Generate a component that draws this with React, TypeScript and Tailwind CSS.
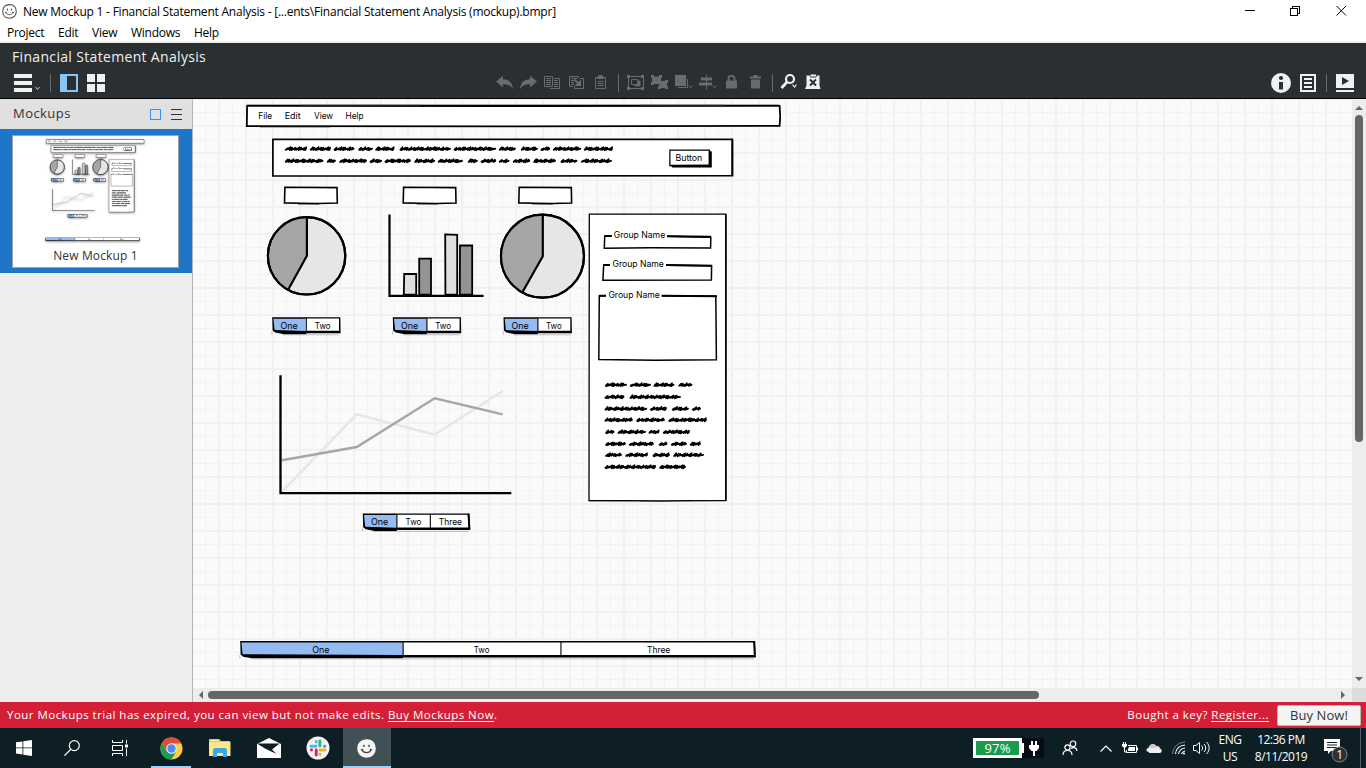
import React from "react";

type Word = [number, number];

const HEADER_LINES: { y: number; words: Word[] }[] = [
  { y: 148.9, words: [[285.3, 306.7], [310.3, 330.7], [334, 354.3], [358.7, 372.7], [375.7, 394.3], [400, 450.7], [454, 496], [499.3, 515.7], [521.3, 537.7], [541, 550], [553.3, 581], [584.3, 612.7]] },
  { y: 161, words: [[285.3, 323.3], [327.3, 335.7], [339.7, 366.7], [370, 381.7], [385, 410.7], [414.7, 435], [438.3, 462.7], [468.3, 477.7], [481, 496], [499.3, 509.3], [513.3, 530], [533.7, 555.7], [561, 577.3], [581.3, 611.7]] },
];

const PANEL_LINES: { y: number; words: Word[] }[] = [
  { y: 384.9, words: [[605.3, 626.7], [630.3, 650.7], [654, 674.3], [678.7, 692.3]] },
  { y: 397, words: [[605, 624.3], [630, 680.7]] },
  { y: 408.8, words: [[605, 647], [650.3, 666.7], [672.3, 688.7], [692.3, 700.7]] },
  { y: 420, words: [[605, 632.7], [636.7, 664.7], [668.7, 706.7]] },
  { y: 432, words: [[605.7, 614.3], [618, 645.7], [649, 659.3], [663.3, 689.7]] },
  { y: 444, words: [[605.7, 625.7], [629.3, 653.7], [659.3, 667.3], [671.3, 686.7], [690.3, 700.7]] },
  { y: 455, words: [[605.7, 621.7], [625.7, 647.7], [653, 669.7], [673.7, 703.7]] },
  { y: 467, words: [[605, 655.7], [659.7, 685.7]] },
];

const STEPS = [1.7, 2.5, 1.5, 3.1, 1.8, 2.2, 2.8, 1.6, 3.3];
const RISES = [1.2, 0.5, 1.7, 1.3, 0.8, 1.9, 1.4];

function scribble([a, b]: Word, y: number) {
  let d = `M${a + 0.3} ${y + 0.9}`;
  let i = Math.round(a * 3 + y);
  let x = a + 1.4;
  while (x < b - 1.6) {
    const up = RISES[i % RISES.length];
    const down = 0.8 + (i % 3) * 0.3;
    d += `L${(x + 1.2).toFixed(1)} ${(y - up).toFixed(1)}L${x.toFixed(1)} ${(y + down).toFixed(1)}`;
    x += STEPS[i % STEPS.length];
    i += 1;
  }
  return d + `L${b - 0.6} ${y - 0.3}`;
}

function Scribbles({ lines }: { lines: { y: number; words: Word[] }[] }) {
  return (
    <g fill="none" stroke="#000" strokeWidth="1.6" strokeLinecap="round" strokeLinejoin="round">
      {lines.map((l) =>
        l.words.map((w) => (
          <g key={`${l.y}-${w[0]}`}>
            <path d={scribble(w, l.y)} />
            <path d={`M${w[0] + 0.8} ${l.y + 0.2}H${w[1] - 0.8}`} strokeWidth="1.2" />
          </g>
        ))
      )}
    </g>
  );
}

function Label({ x, y, w, children }: { x: number; y: number; w: number; children: string }) {
  return (
    <text x={x} y={y} textLength={w} lengthAdjust="spacingAndGlyphs" fontSize="8.8" fill="#000" className="font-['Inter','Open_Sans',sans-serif]">
      {children}
    </text>
  );
}

function Pie({ cx, cy, r, ex, ey }: { cx: number; cy: number; r: number; ex: number; ey: number }) {
  return (
    <g stroke="#000" strokeWidth="2.2" strokeLinejoin="round">
      <circle cx={cx} cy={cy} r={r} fill="#e6e6e6" />
      <path d={`M${cx + 0.3} ${cy}V${cy - r}A${r} ${r} 0 0 0 ${ex} ${ey}Z`} fill="#a6a6a6" stroke="none" />
      <path d={`M${cx + 0.3} ${cy - r}V${cy}L${ex} ${ey}`} fill="none" />
      <circle cx={cx} cy={cy} r={r} fill="none" />
    </g>
  );
}

type Seg = { t: string; x: number; w: number };

function ButtonBar({ x, y, right, h, dividers, segs }: { x: number; y: number; right: number; h: number; dividers: number[]; segs: Seg[] }) {
  const b = y + h;
  return (
    <g>
      <path d={`M${x} ${y}H${right}L${right + 0.3} ${b - 0.7}H${dividers[0]}V${b + 0.2}H${x + 12}L${x + 3} ${b - 1.4}L${x + 0.4} ${b - 3.5}Z`} fill="#000" />
      <path d={`M${x - 0.3} ${b - 3}V${b + 0.6}M${x + 10} ${b + 0.8}H${right - 1}`} stroke="#999" strokeWidth=".6" />
      <path d={`M${x + 1.2} ${y + 1.5}H${dividers[0]}V${b - 3}L${x + 2.4} ${b - 3.9}Z`} fill="#94bbf2" />
      {dividers.map((d, i) => (
        <path
          key={d}
          d={`M${d + 0.5} ${y + 1.4}H${(dividers[i + 1] ?? right - 0.7) - 0.6}V${b - 3.2}H${d + 0.5}Z`}
          fill="#fff"
        />
      ))}
      <path d={`M${dividers[0]} ${y + 1}V${b - 1}`} stroke="#222" strokeWidth="1" />
      {segs.map((s) => (
        <Label key={s.t} x={s.x} y={y + 11.6} w={s.w}>{s.t}</Label>
      ))}
    </g>
  );
}

function Wireframe({ viewBox, className }: { viewBox: string; className: string }) {
  return (
    <svg viewBox={viewBox} className={className} aria-hidden="true">
      {/* menu bar */}
      <path d="M247.1 105.8L520 106L779.6 105.8L780.2 117L779.6 125.9L520 126.3L246.8 126.1Z" fill="#fff" stroke="#000" strokeWidth="1.8" />
      <path d="M247 105.2H779" stroke="#000" strokeWidth="1" />
      <path d="M300 104.8H420M640 104.8H725M260 127.4H330" stroke="#888" strokeWidth=".7" />
      <Label x={258.3} y={118.8} w={13.8}>File</Label>
      <Label x={284.7} y={118.8} w={16}>Edit</Label>
      <Label x={314} y={118.8} w={19}>View</Label>
      <Label x={345.5} y={118.8} w={18.2}>Help</Label>

      {/* header block */}
      <path d="M272.900 139.300L732.400 139.400V175.600L500 176L272.900 175.900Z" fill="#fff" stroke="#000" strokeWidth="1.700" />
      <path d="M732.300 140V176" stroke="#000" strokeWidth="1.800" />
      <Scribbles lines={HEADER_LINES} />
      <path d="M669.3 149.5H710V151L711.8 151.4V167.6H672L671.5 166.2H669.2Z" fill="#000" />
      <path d="M670.5 150.8H708.6V164.5L670.5 164.7Z" fill="#fff" />
      <Label x={675.5} y={161} w={26.8}>Button</Label>

      {[284, 402.7, 518.3].map((x) => (
        <g key={x}>
          <path d={`M${x + 0.9} 187.3L${x + 53} 187.6L${x + 53.3} 203L${x + 34} 203.500L${x + 17} 203.300L${x + 0.5} 202.900Z`} fill="#fff" stroke="#000" strokeWidth="1.600" />
          <path d={`M${x + 14} 203.9H${x + 35}`} stroke="#000" strokeWidth="1" />
        </g>
      ))}

      <Pie cx={306.6} cy={255.8} r={38.7} ex={288.4} ey={289.2} />
      <Pie cx={542.5} cy={256.2} r={41.5} ex={522.4} ey={292.2} />

      {/* column chart */}
      <g stroke="#000" strokeWidth="1.8">
        <path d="M404.2 274H416.2V294.6H403.8Z" fill="#dedede" />
        <path d="M419.2 258.6H431V294.6H419.2Z" fill="#939393" />
        <path d="M445.2 234.3L457.2 234.8V294.6H445.4Z" fill="#dedede" />
        <path d="M460 245.5H472.2V294.6H459.8Z" fill="#939393" />
      </g>
      <path d="M389.5 214.5V295.8H483.6" fill="none" stroke="#000" strokeWidth="2.2" />

      <ButtonBar x={272.2} y={317.2} right={340.3} h={16.8} dividers={[306.4]} segs={[{ t: "One", x: 280.4, w: 17.2 }, { t: "Two", x: 314.8, w: 15.8 }]} />
      <ButtonBar x={392.8} y={317.2} right={460.9} h={16.8} dividers={[426.8]} segs={[{ t: "One", x: 400.9, w: 17.2 }, { t: "Two", x: 435.2, w: 15.8 }]} />
      <ButtonBar x={503.5} y={317.2} right={571.6} h={16.8} dividers={[537.8]} segs={[{ t: "One", x: 511.6, w: 17.2 }, { t: "Two", x: 545.9, w: 15.8 }]} />

      {/* line chart */}
      <path d="M282 491.7L356.7 414.3L434.7 434.7L502.7 391" fill="none" stroke="#e6e6e6" strokeWidth="2.4" />
      <path d="M282 460.2L356.7 447L434.7 398.3L502.7 414.3" fill="none" stroke="#a6a6a6" strokeWidth="2.4" />
      <path d="M280.5 375.3V493.2H511.3" fill="none" stroke="#000" strokeWidth="2.3" />

      <ButtonBar x={362.8} y={513.4} right={469.6} h={17.3} dividers={[396.8, 430.4]} segs={[{ t: "One", x: 371, w: 17.2 }, { t: "Two", x: 405.5, w: 15.8 }, { t: "Three", x: 438.8, w: 23.2 }]} />
      <path d="M468.300 513.800L469.600 529.500" stroke="#000" strokeWidth="1.800" />
      <ButtonBar x={240.2} y={641.1} right={755.2} h={17} dividers={[403, 561]} segs={[{ t: "One", x: 312.2, w: 17.2 }, { t: "Two", x: 473.7, w: 15.8 }, { t: "Three", x: 647, w: 23.2 }]} />
      <path d="M754 641.300L755 657" stroke="#000" strokeWidth="1.900" />

      {/* form panel */}
      <path d="M589.3 214.2H725.8V500.3L660 501L589 500.5Z" fill="#fff" stroke="#000" strokeWidth="1.3" />
      <path d="M725.8 214.5V501" stroke="#000" strokeWidth="1.6" />
      <path d="M589 501.6H640M690 501.4H726" stroke="#999" strokeWidth=".7" />
      <g fill="none" stroke="#000" strokeWidth="1.5">
        <path d="M611.7 236.1H604.7L604.3 248.2L650 247.8L710.6 248.1L710.8 237.2L667 236.2" />
        <path d="M610 265H603.7L602.9 280.2L711.4 280L711.6 265.8L666 265.2" />
        <path d="M606 295.8H599.3L598.8 359.4L655 360.2L716.4 359.8L715.8 296.2L661.7 295.8" />
      </g>
      <g stroke="#000" strokeWidth="2">
        <path d="M604.8 236H611.7M603.8 265H610M599.4 295.8H606M667 236.2L711 236.8M666 265L712 265.8M661.7 295.8L717 296.3" />
      </g>
      <Label x={613.8} y={237.8} w={51.4}>Group Name</Label>
      <Label x={612.5} y={266.9} w={51.4}>Group Name</Label>
      <Label x={608.4} y={297.7} w={51.4}>Group Name</Label>
      <Scribbles lines={PANEL_LINES} />
    </svg>
  );
}

function Grid() {
  return (
    <svg className="absolute inset-0 h-full w-full">
      <defs>
        <pattern id="grid" x="-2" y="-1" width="27" height="27" patternUnits="userSpaceOnUse">
          <path d="M0 0H2V27H0ZM0 0H27V2H0Z" fill="#f1f1f1" />
          <path d="M14 0H15V27H14ZM0 14H27V15H0Z" fill="#f3f3f3" />
        </pattern>
      </defs>
      <rect width="100%" height="100%" fill="url(#grid)" />
    </svg>
  );
}

function Face({ className, filled }: { className: string; filled?: boolean }) {
  return (
    <svg viewBox="0 0 20 20" className={className} fill="none" strokeLinecap="round">
      <path d="M10 .9C15.5.7 18.9 4 19 9.6C19.1 15 16 19 10 19C4.400 19 1 15.200 1 10C1 4.500 4.500 1 10 .9Z" fill={filled ? "#f4f4f4" : "#fff"} stroke={filled ? "#f4f4f4" : "#555"} strokeWidth="1.5" />
      <path d="M5.300 11.300C7 15.300 13 15.300 14.800 11.200M4.600 11.500L5.800 10.900M14.100 10.900L15.400 11.400" stroke="#444" strokeWidth="1.3" />
      <ellipse cx="7.300" cy="7.300" rx=".9" ry="1.200" fill="#444" />
      <ellipse cx="12.600" cy="7.300" rx=".9" ry="1.200" fill="#444" />
    </svg>
  );
}

function Cell({ children, on }: { children: React.ReactNode; on?: boolean }) {
  return (
    <svg viewBox="0 0 24 24" className={on ? "h-6 w-6 shrink-0 text-[#f0f0f0]" : "h-6 w-6 shrink-0 text-[#696b6c]"} fill="none" stroke="currentColor">
      {children}
    </svg>
  );
}

function Sep({ className }: { className: string }) {
  return (
    <div className={`flex h-[18px] shrink-0 justify-center ${className}`}>
      <div className="w-px bg-[#686b6d]" />
    </div>
  );
}

function TitleBar() {
  return (
    <header className="flex h-[22px] items-center bg-white">
      <Face className="ml-0.5 h-[15px] w-[15px]" />
      <span className="ml-1.5 whitespace-pre pt-px text-[12px] leading-[18px] tracking-[-0.226px]">New Mockup 1 - Financial Statement Analysis - [...ents\Financial Statement Analysis (mockup).bmpr]</span>
      <svg viewBox="0 0 102 12" className="ml-auto mr-[19px] h-3 w-[102px] fill-none stroke-black" shapeRendering="crispEdges">
        <path d="M0 5.500H10" />
        <path d="M45.500 3.500H52.500V10.500H45.500ZM47.500 3V1.500H54.500V8.500H53" />
        <path d="M91.500 1L101 10.500M101 1L91.500 10.500" shapeRendering="auto" />
      </svg>
    </header>
  );
}

function MenuBar() {
  return (
    <nav className="flex h-[21px] border-b-2 border-[#f0f0f0] bg-white pl-[7px] text-[12px] leading-[21px] tracking-[-0.25px]">
      <span className="w-[51px]">Project</span>
      <span className="w-[34px]">Edit</span>
      <span className="w-[39px]">View</span>
      <span className="w-[63px]">Windows</span>
      <span>Help</span>
    </nav>
  );
}

function Toolbar() {
  return (
    <section className="h-14 border-b border-black bg-[#2a2f31] text-[#f0f0f0]">
      <h1 className="h-7 pl-3 pt-0.5 text-[14px] leading-6 tracking-[0.33px]">Financial Statement Analysis</h1>
      <div className="flex h-6 items-center">
        <div className="flex w-[493px] items-center pl-3.5">
          <svg viewBox="0 0 27 18" className="h-[18px] w-[27px]" fill="#f0f0f0">
            <path d="M0 0H18V4H0ZM0 7H18V11H0ZM0 14H18V18H0Z" />
            <path d="M21.500 13L23.500 15.500L25.500 13" fill="none" stroke="#ccc" />
          </svg>
          <Sep className="w-[19px]" />
          <svg viewBox="0 0 18 18" className="h-[18px] w-[18px]">
            <path d="M0 0H18V18H0ZM7 2V16H16V2Z" fill="#8cc4f2" fillRule="evenodd" />
          </svg>
          <svg viewBox="0 0 18 18" className="ml-[9px] h-[18px] w-[18px]" fill="#f0f0f0">
            <path d="M0 0H8V8H0ZM10 0H18V8H10ZM0 10H8V18H0ZM10 10H18V18H10Z" />
          </svg>
        </div>
        <Cell><path d="M3 10.500L10 4.700V8.200C16 8.200 19.500 11.500 20 18.500C18 14.500 15 13 10 13.200V16.500Z" fill="currentColor" stroke="none" /></Cell>
        <Cell><path d="M20 10.500L13 4.700V8.200C7 8.200 3.500 11.500 3 18.500C5 14.500 8 13 13 13.200V16.500Z" fill="currentColor" stroke="none" /></Cell>
        <Cell>
          <path d="M3.500 5.500H11.500V15.500H3.500ZM5 7.500H10M5 9.500H10M5 11.500H10M5 13.500H10" />
          <path d="M13 7.500H18.500V17.500H9M13 9.500H17M13 11.500H17M13 13.500H17M13 15.500H17" />
        </Cell>
        <Cell>
          <path d="M8 15.500H4.500V5.500H13.500V7M6 7.500H12M6 9.500H9M6 11.500H9M6 13.500H9" />
          <path d="M15 7.500H18.500V17.500H9.500V15" />
          <path d="M9.500 8.500L14.500 13.500" strokeWidth="2" />
          <path d="M16 8.500V15H9.500Z" fill="currentColor" stroke="none" />
        </Cell>
        <Cell>
          <path d="M6.500 6.500H16.500V17.500H6.500Z" />
          <path d="M8.500 5.500H9.500V4H13.500V5.500H14.500V8H8.500Z" fill="currentColor" stroke="none" />
          <path d="M8.500 10.500H14.500M8.500 12.500H14.500M8.500 14.500H14.500" />
        </Cell>
        <Sep className="w-2.5" />
        <Cell>
          <path d="M5.500 6V17M20.500 6V17M6 5.500H20M6 17.500H20M8.500 8.500H14.500V13.500H8.500Z" />
          <path d="M15.500 10H17V15H12V14.500H15.500Z" fill="currentColor" />
          <path d="M4 4H7V7H4ZM18 4H21V7H18ZM4 16H7V19H4ZM18 16H21V19H18Z" fill="currentColor" stroke="none" />
        </Cell>
        <Cell>
          <path d="M5.500 6H13.500V12.500H5.500ZM13 10.500H19.500V16.500H12.500Z" fill="currentColor" />
          <path d="M4 4H7V7H4ZM12 4H15V7H12ZM4 11H7V14H4ZM18 9H21V12H18ZM18 15H21V18H18ZM11 15H14V18H11Z" fill="currentColor" stroke="none" />
        </Cell>
        <Cell>
          <path d="M4 4H15V15H4Z" fill="currentColor" stroke="none" />
          <path d="M7 16.500H16.500V8M17.500 14.500L19.500 17L21.500 14.500" />
        </Cell>
        <Cell>
          <path d="M6 6.500H17V9.500H6ZM4 11.500H17V14.500H4Z" fill="currentColor" stroke="none" />
          <path d="M11.500 4V18.500M17.500 14.500L19.500 17L21.500 14.500" />
        </Cell>
        <Cell>
          <path d="M7 9.500H18V17.500H7Z" fill="currentColor" stroke="none" />
          <path d="M9.500 11V7.500C9.500 4 15.500 4 15.500 7.500V11" strokeWidth="1.800" />
        </Cell>
        <Cell>
          <path d="M7 5.500H18V7.500H7ZM10.500 4H14.500V6H10.500ZM8 8.500H17V17.500H8Z" fill="currentColor" stroke="none" />
        </Cell>
        <Sep className="w-2.5" />
        <Cell on>
          <circle cx="13" cy="8" r="4" strokeWidth="2.200" />
          <path d="M10 11L4.500 17" strokeWidth="2.800" />
          <path d="M15.500 13.500L17.500 16L19.500 13.500" strokeWidth="1.200" />
        </Cell>
        <Cell on>
          <path d="M5.500 4.500H8.500L9.500 6.500H15L16 4.500H18.500V14.500L19.500 18H4L5.500 14.500Z" fill="currentColor" stroke="none" />
          <path d="M9.500 3.500H15V5.500H9.500Z" fill="currentColor" stroke="none" />
          <path d="M9 8.500L15 14.500M15 8.500L9 14.500" stroke="#2a2f31" strokeWidth="1.900" />
        </Cell>
        <svg viewBox="0 0 20 20" className="ml-auto h-5 w-5">
          <circle cx="10" cy="10" r="10" fill="#f0f0f0" />
          <circle cx="10" cy="5" r="2.100" fill="#2a2f31" />
          <path d="M8 9H12V16.500H8Z" fill="#2a2f31" />
        </svg>
        <svg viewBox="0 0 16 18" className="ml-[9px] h-[18px] w-4" fill="none" stroke="#f0f0f0" strokeWidth="2">
          <path d="M1 1H15V17H1ZM4 5H12M4 9H12M4 13H12" />
        </svg>
        <Sep className="w-5" />
        <svg viewBox="0 0 18 18" className="mr-3 h-[18px] w-[18px]">
          <path d="M0 0H18V14H0ZM0 16H18V18H0Z" fill="#f0f0f0" />
          <path d="M6 3L13 7L6 11Z" fill="#2a2f31" />
        </svg>
      </div>
    </section>
  );
}

function Sidebar() {
  return (
    <aside className="w-[193px] shrink-0 border-r border-[#b4b4b4] bg-[#eeeeee] text-[#333]">
      <div className="flex h-[30px] items-center bg-[#e0e0e0] pl-[13px] pr-2.5">
        <h2 className="-mt-0.5 text-[13px] leading-4 tracking-[0.45px]">Mockups</h2>
        <div className="ml-auto h-[11px] w-[11px] border border-[#2f96f3]" />
        <svg viewBox="0 0 11 11" className="ml-2.5 h-[11px] w-[11px]"><path d="M0 .5H11M0 5.500H11M0 10.500H11" stroke="#333" /></svg>
      </div>
      <div className="h-36 bg-[#1f75c8] pl-3 pt-1.5">
        <div className="flex h-[133px] w-[167px] flex-col items-center border border-[#a0a0a0] bg-white">
          <Wireframe viewBox="65 87 900 610" className="h-[112px] w-[165px] shrink-0 drop-shadow-[0_1px_1px_rgba(0,0,0,0.45)]" />
          <p className="text-[12px] leading-4 tracking-[0.15px]">New Mockup 1</p>
        </div>
      </div>
    </aside>
  );
}

function Canvas() {
  return (
    <main className="flex min-w-0 flex-1 flex-col">
      <div className="flex min-h-0 flex-1">
        <div className="relative min-w-0 flex-1 overflow-hidden bg-[#fafafa]">
          <Grid />
          <Wireframe viewBox="193 99 1159 589" className="relative h-[589px] w-[1159px]" />
        </div>
        <div className="flex w-3.5 flex-col items-center bg-[#ededed] pt-[7px]">
          <svg viewBox="0 0 8 4" className="h-1 w-2"><path d="M0 4L4 0L8 4Z" fill="#666" /></svg>
          <div className="mt-[5px] h-[327px] w-2 rounded-full bg-[#666]" />
          <svg viewBox="0 0 8 4" className="mb-[7px] mt-auto h-1 w-2"><path d="M0 0L4 4L8 0Z" fill="#666" /></svg>
        </div>
      </div>
      <div className="flex h-3.5 items-center bg-[#ededed] pl-1.5">
        <svg viewBox="0 0 4 8" className="h-2 w-1"><path d="M4 0L0 4L4 8Z" fill="#666" /></svg>
        <div className="ml-[5px] h-2 w-[831px] rounded-full bg-[#666]" />
        <svg viewBox="0 0 4 8" className="ml-auto mr-[7px] h-2 w-1"><path d="M0 0L4 4L0 8Z" fill="#666" /></svg>
        <div className="h-full w-3.5 bg-[#dcdcdc]" />
      </div>
    </main>
  );
}

function TrialBar() {
  return (
    <section className="flex h-[26px] items-center bg-[#d32037] pl-[7px] pr-[5px] text-[11.5px] tracking-[0.47px] text-white">
      <p>Your Mockups trial has expired, you can view but not make edits. <u className="underline-offset-2">Buy Mockups Now</u>.</p>
      <p className="ml-auto">Bought a key? <u className="underline-offset-2">Register...</u></p>
      <button className="ml-2 h-[21px] w-[84px] rounded-[2px] border border-[#bbb] bg-[#f4f4f4] text-[13px] leading-[18px] tracking-[0.1px] text-[#333]">Buy Now!</button>
    </section>
  );
}

function TaskCell({ children, className }: { children: React.ReactNode; className: string }) {
  return <div className={`flex h-10 w-12 shrink-0 items-center justify-center ${className}`}>{children}</div>;
}

function Taskbar() {
  return (
    <footer className="flex h-10 bg-[#0d1e25] text-white">
      <div className="flex">
        <TaskCell className="">
          <svg viewBox="0 0 16 16" className="h-4 w-4" fill="#fff"><path d="M0 2.300L6.500 1.400V7.500H0ZM7.300 1.300L16 0V7.500H7.300ZM0 8.300H6.500V14.500L0 13.600ZM7.300 8.300H16V16L7.300 14.700Z" /></svg>
        </TaskCell>
        <TaskCell className="">
          <svg viewBox="0 0 16 16" className="h-4 w-4" fill="none" stroke="#fff" strokeWidth="1.200"><circle cx="10.300" cy="5.600" r="5" /><path d="M6.800 9.300L.4 15.600" /></svg>
        </TaskCell>
        <TaskCell className="">
          <svg viewBox="0 0 18 16" className="h-4 w-[18px]" fill="none" stroke="#fff"><path d="M1.500 0V2.500H11.500V0M1.500 16V13.500H11.500V16M1.500 5.500H11.500V10.500H1.500ZM15.500 0V3.500M15.500 8.500V16" /><path d="M14 4.500H17V7.500H14Z" fill="#fff" stroke="none" /></svg>
        </TaskCell>
        <TaskCell className="ml-[3px] bg-[linear-gradient(#9fd0f8,#9fd0f8)] bg-[length:40px_2px] bg-bottom bg-no-repeat">
          <svg viewBox="0 0 48 48" className="h-[23px] w-[23px]">
            <circle cx="24" cy="24" r="23" fill="#ffcd42" />
            <path d="M4.080 12.500A23 23 0 0 0 24 47L34 29.500L24 24L14 29.700Z" fill="#179c58" />
            <path d="M4.080 12.500A23 23 0 0 1 44.500 13.500H24L14 29.700Z" fill="#dd4b3e" />
            <circle cx="24" cy="24" r="11" fill="#f1f1f1" />
            <circle cx="24" cy="24" r="8.700" fill="#4a8af4" />
          </svg>
        </TaskCell>
        <TaskCell className="">
          <svg viewBox="0 0 22 18" className="ml-0.5 h-[18px] w-[22px]">
            <path d="M0 0H10L12 2H21V17H0Z" fill="#f5bf3e" />
            <path d="M0 3H21.500V17H0Z" fill="#fde691" />
            <path d="M1.500 1H9V2H1.500Z" fill="#fff3c4" />
            <path d="M4 10.500L5.500 9H16.500L18 10.500V18H14V14H8V18H4Z" fill="#38a9e4" />
          </svg>
        </TaskCell>
        <TaskCell className="">
          <svg viewBox="0 0 24 20" className="ml-[3px] h-5 w-6 shrink-0"><path d="M0 6L12 0L24 6V20H0Z" fill="#fff" /><path d="M0 5.500H22.500L15 11.500L19.500 16L8 10.500Z" fill="#0d1e25" /></svg>
        </TaskCell>
        <TaskCell className="">
          <svg viewBox="0 0 24 24" className="ml-[5px] h-6 w-6 shrink-0" fill="none" strokeWidth="2.900" strokeLinecap="round">
            <circle cx="12" cy="12" r="11.500" fill="#f5f3f3" />
            <path d="M5 10.300H10M10.200 5.500V6" stroke="#36c5f0" />
            <path d="M13.900 5V10M18.500 10.300H18.800" stroke="#2eb67d" />
            <path d="M14 14H19M14 18.500V18.300" stroke="#ecb22e" />
            <path d="M10.200 14V19M5.400 14H5.600" stroke="#e01e5a" />
          </svg>
        </TaskCell>
        <TaskCell className="ml-1 border-b-2 border-[#9fd0f8] bg-[#415055] pt-0.5">
          <Face filled className="mr-px h-[19px] w-[19px]" />
        </TaskCell>
      </div>
      <div className="ml-auto flex items-center">
        <div className="flex h-5 w-[71px] items-center bg-[#060b16]">
          <div className="flex h-5 w-[49px] items-center justify-center border-[3px] border-white bg-[#1a9c4c] text-[13px] leading-none tracking-[0.2px]">97%</div>
          <div className="h-2.5 w-0.5 bg-white" />
          <svg viewBox="0 0 10 16" className="ml-[5px] h-4 w-2.5" fill="#fff"><path d="M2 1H4V5H6V1H8V5H10V8L7.500 11H6V16H4V11H2.500L0 8V5H2Z" /></svg>
        </div>
        <svg viewBox="0 0 16 16" className="ml-[18px] h-4 w-4" fill="none" stroke="#fff" strokeWidth="1.200"><circle cx="11" cy="3.800" r="2.800" /><circle cx="5.500" cy="7.500" r="2.600" /><path d="M1 15C1 9 10 9 10 15M9 8.500C12 6.500 15 8 15 11" /></svg>
        <svg viewBox="0 0 12 7" className="ml-[22px] h-[7px] w-3" fill="none" stroke="#fff" strokeWidth="1.200"><path d="M.5 6.500L6 1L11.500 6.500" /></svg>
        <svg viewBox="0 0 16 12" className="ml-2.5 h-3 w-4" fill="none" stroke="#fff"><path d="M6 3.500H14.500V10.500H4.500V8M15.500 5.500V8.500M1.500 0V2M3.500 0V2M2.500 5V10H4" /><path d="M0 2H5V4L3.500 5.500H1.500L0 4ZM7 5H13V9H6V7Z" fill="#fff" stroke="none" /></svg>
        <svg viewBox="0 0 16 10" className="ml-2 h-2.5 w-4"><path d="M3 9C0 9-.5 5.500 2.500 5C3 1 8 0 10 3C13 2.500 14 4.500 13.800 5.500C16.500 6 16 10 14 10H3Z" fill="#eee" /><path d="M3 4C4.500 0 9.500 0 10.500 3.500L12 5C8 4 7 7 3 4Z" fill="#c5cacc" /></svg>
        <svg viewBox="0 0 14 14" className="ml-2.5 h-3.5 w-3.5" fill="none" stroke="#fff"><path d="M.5 13C1 6 6 1.500 13 1" stroke="#7b868a" /><path d="M3.500 13C4 8 7.500 4.500 13 4M6.500 13C7 10 9 7.500 13 7M9.500 13C10 11.500 11 10.500 13 10" strokeWidth="1.100" /><circle cx="12" cy="12.500" r="1" fill="#fff" stroke="none" /></svg>
        <svg viewBox="0 0 17 14" className="ml-[7px] h-3.5 w-[17px]" fill="none" stroke="#fff"><path d="M.5 4.500H3L6.500 1.500V12.500L3 9.500H.5ZM8.500 4.500C10 6 10 8 8.500 9.500M11 3C13.300 5.500 13.300 8.500 11 11M13.500 1C17 4.500 17 9.500 13.500 13" /></svg>
        <div className="ml-2 w-6 text-center text-[12px] leading-[17px] tracking-[-0.5px]">ENG<br />US</div>
        <div className="ml-2 w-[62px] text-center text-[12px] leading-[17px] tracking-[-0.5px]">12:36 PM<br />8/11/2019</div>
        <svg viewBox="0 0 26 28" className="ml-[11px] mt-1.5 h-7 w-[26px]">
          <path d="M1 2H17V14H8L5 17V14H1Z" fill="#fff" />
          <path d="M4 5.500H14M4 8H14M4 10.500H14" stroke="#0d1e25" />
          <circle cx="16.500" cy="17.500" r="7.500" fill="#2b3034" stroke="#80888b" />
          <text x="13.300" y="21.900" fontSize="12" fill="#fff">1</text>
        </svg>
        <div className="ml-[11px] mr-[5px] h-10 w-px bg-[#52606a]" />
      </div>
    </footer>
  );
}

export default function App() {
  return (
    <div className="flex h-[768px] w-[1366px] flex-col overflow-hidden whitespace-nowrap bg-white font-['Open_Sans','Noto_Sans',sans-serif] text-black">
      <TitleBar />
      <MenuBar />
      <Toolbar />
      <div className="flex min-h-0 flex-1">
        <Sidebar />
        <Canvas />
      </div>
      <TrialBar />
      <Taskbar />
    </div>
  );
}
